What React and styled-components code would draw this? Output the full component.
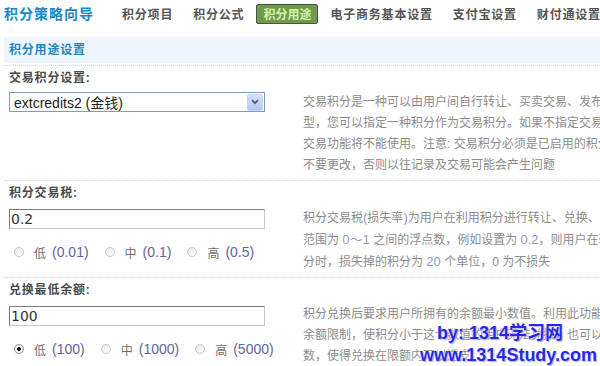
import React from 'react';
import styled, { createGlobalStyle } from 'styled-components';

const Global = createGlobalStyle`
  html, body { margin: 0; padding: 0; background: #fff; }
  body {
    width: 600px; height: 366px; overflow: hidden;
    font-family: "Liberation Sans", "Noto Sans CJK SC", sans-serif;
    font-size: 12px;
  }
`;

const Page = styled.div`
  position: relative;
  width: 600px;
  height: 366px;
  overflow: hidden;
  padding-left: 4px;
  box-sizing: border-box;
`;

const Header = styled.header`
  display: flex;
  align-items: center;
  height: 27px;
  margin-bottom: 10px;
  white-space: nowrap;
`;

const Title = styled.h1`
  margin: 0 20px 0 0;
  font-size: 14px;
  line-height: 20px;
  letter-spacing: 1px;
  font-weight: 700;
  color: #1689c6;
`;

const Nav = styled.nav`
  display: flex;
  align-items: center;
  gap: 4px;
`;

const NavItem = styled.span`
  display: inline-flex;
  align-items: center;
  box-sizing: border-box;
  height: 20px;
  padding: 0 ${p => (p.$active ? 6 : 7)}px;
  font-size: 12px;
  font-weight: 700;
  letter-spacing: ${p => (p.$active ? 0 : 0.8)}px;
  color: ${p => (p.$active ? '#d8f3aa' : '#555')};
  background: ${p => (p.$active ? '#6e9a4a' : 'transparent')};
  border: 1px solid ${p => (p.$active ? '#4f4f4f' : 'transparent')};
  border-radius: 2px;
`;

const SectionHead = styled.div`
  height: 26px;
  line-height: 26px;
  padding-left: 5px;
  margin-bottom: 2px;
  background: #eef5fc;
  color: #1a87c3;
  font-weight: 700;
  letter-spacing: 0.8px;
`;

const Block = styled.section`
  border-top: 1px dotted #c6d5e3;
  padding-bottom: 4px;
`;

const Label = styled.div`
  height: 26px;
  box-sizing: border-box;
  padding: 3px 0 0 5px;
  line-height: 18px;
  font-weight: 700;
  color: #4a4a4a;
  letter-spacing: 0.8px;
`;

const Body = styled.div`
  display: flex;
  align-items: flex-start;
`;

const Left = styled.div`
  flex-shrink: 0;
  width: 294px;
  padding-left: 5px;
`;

const Tip = styled.div`
  flex: 1;
  min-width: 0;
  overflow: hidden;
  color: #8c8c8c;
  font-size: 12px;
  line-height: 21px;
`;

const TipLine = styled.div`
  white-space: nowrap;
`;

const TipNum = styled.span`
  color: #8f97cc;
  font-size: 13px;
`;

const SelectBox = styled.div`
  display: flex;
  align-items: center;
  width: 256px;
  height: 20px;
  box-sizing: border-box;
  border: 1px solid #7f9db9;
  padding: 0 1px 0 4px;
  background: #fff;
`;

const SelectText = styled.span`
  flex: 1;
  font-size: 14px;
  color: #222;
  white-space: nowrap;
`;

const SelectArrow = styled.span`
  display: flex;
  align-items: center;
  justify-content: center;
  width: 16px;
  height: 17px;
  box-sizing: border-box;
  border: 1px solid #c5d4f4;
  border-radius: 2px;
  background: linear-gradient(#d6e1fa, #b5c8f3);
`;

const TextInput = styled.input`
  display: block;
  width: 256px;
  height: 20px;
  box-sizing: border-box;
  margin: 2px 0 0;
  padding: 0 1px;
  border: 1px solid;
  border-color: #7b7b7b #c8c8c8 #c8c8c8 #7b7b7b;
  font-family: "DejaVu Sans", sans-serif;
  font-size: 14px;
  color: #333;
  background: #fff;
  outline: none;
`;

const Radios = styled.div`
  display: flex;
  align-items: center;
  height: 20px;
  margin-top: 13px;
  padding-left: 5px;
  gap: 16px;
  white-space: nowrap;
`;

const RadioItem = styled.label`
  display: inline-flex;
  align-items: center;
`;

const Circle = styled.span`
  width: 10px;
  height: 10px;
  box-sizing: border-box;
  border-radius: 50%;
  border: 1px solid ${p => (p.$checked ? '#8d8d8d' : '#c6c6c6')};
  background: ${p =>
    p.$checked
      ? 'radial-gradient(circle, #000 0 1.6px, #f4f4f4 2.2px)'
      : 'linear-gradient(135deg, #e6e6e6, #fff)'};
  margin-right: 10px;
`;

const RadioChar = styled.span`
  color: #6f6f6f;
  font-size: 12px;
`;

const RadioNum = styled.span`
  margin-left: 6px;
  color: #63639f;
  font-size: 14px;
`;

const Watermark = styled.div`
  position: absolute;
  left: 420px;
  top: 322px;
  font-weight: 700;
  font-size: 18px;
  line-height: 22px;
  color: #2727e6;
  text-shadow: 0 0 2px #fff, 0 0 1px #fff, 1px 1px 1px rgba(70, 70, 170, 0.55);
  white-space: nowrap;
  pointer-events: none;
`;

const WmLine = styled.div`
  padding-left: ${p => p.$indent || 0}px;
`;

const Chevron = () => (
  <svg width="8" height="6" viewBox="0 0 8 6">
    <path d="M1 1.2 L4 4.2 L7 1.2" fill="none" stroke="#4b5f86" strokeWidth="1.8" />
  </svg>
);

const Radio = ({ checked, ch, num }) => (
  <RadioItem>
    <Circle $checked={checked} />
    <RadioChar>{ch}</RadioChar>
    <RadioNum>{num}</RadioNum>
  </RadioItem>
);

const navs = ['积分项目', '积分公式', '积分用途', '电子商务基本设置', '支付宝设置', '财付通设置'];

export default function App() {
  return (
    <Page>
      <Global />
      <Header>
        <Title>积分策略向导</Title>
        <Nav>
          {navs.map(n => (
            <NavItem key={n} $active={n === '积分用途'}>{n}</NavItem>
          ))}
        </Nav>
      </Header>

      <SectionHead>积分用途设置</SectionHead>

      <Block>
        <Label>交易积分设置:</Label>
        <Body>
          <Left>
            <SelectBox>
              <SelectText>extcredits2 (金钱)</SelectText>
              <SelectArrow><Chevron /></SelectArrow>
            </SelectBox>
          </Left>
          <Tip>
            <TipLine>交易积分是一种可以由用户间自行转让、买卖交易、发布悬赏主题的积分类</TipLine>
            <TipLine>型，您可以指定一种积分作为交易积分。如果不指定交易积分，则用户间积分</TipLine>
            <TipLine>交易功能将不能使用。注意: 交易积分必须是已启用的积分，一旦确定请尽量</TipLine>
            <TipLine>不要更改，否则以往记录及交易可能会产生问题</TipLine>
          </Tip>
        </Body>
      </Block>

      <Block>
        <Label>积分交易税:</Label>
        <Body>
          <Left>
            <TextInput readOnly value="0.2" />
            <Radios>
              <Radio ch="低" num="(0.01)" />
              <Radio ch="中" num="(0.1)" />
              <Radio ch="高" num="(0.5)" />
            </Radios>
          </Left>
          <Tip>
            <TipLine>积分交易税<TipNum>(</TipNum>损失率<TipNum>)</TipNum>为用户在利用积分进行转让、兑换、买卖时扣除的税率，</TipLine>
            <TipLine>范围为 <TipNum>0～1</TipNum> 之间的浮点数，例如设置为 <TipNum>0.2</TipNum>，则用户在转换 100 个单位积</TipLine>
            <TipLine>分时，损失掉的积分为 <TipNum>20</TipNum> 个单位，0 为不损失</TipLine>
          </Tip>
        </Body>
      </Block>

      <Block>
        <Label>兑换最低余额:</Label>
        <Body>
          <Left>
            <TextInput readOnly value="100" />
            <Radios>
              <Radio checked ch="低" num="(100)" />
              <Radio ch="中" num="(1000)" />
              <Radio ch="高" num="(5000)" />
            </Radios>
          </Left>
          <Tip>
            <TipLine>积分兑换后要求用户所拥有的余额最小数值。利用此功能，你可以设置较大的</TipLine>
            <TipLine>余额限制，使积分小于这个数值的用户无法兑换；也可以将余额限制设置为负</TipLine>
            <TipLine>数，使得兑换在限额内可以透支</TipLine>
          </Tip>
        </Body>
      </Block>

      <Watermark>
        <WmLine $indent={17}>by: 1314学习网</WmLine>
        <WmLine>www.1314Study.com</WmLine>
      </Watermark>
    </Page>
  );
}
